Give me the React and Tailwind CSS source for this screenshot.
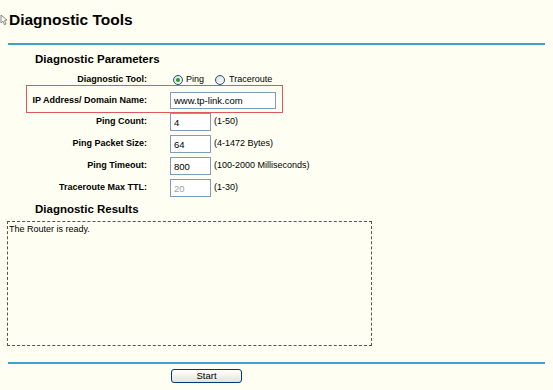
import React from "react";

const rows = [
  { label: "Ping Count:", value: "4", hint: "(1-50)" },
  { label: "Ping Packet Size:", value: "64", hint: "(4-1472 Bytes)" },
  { label: "Ping Timeout:", value: "800", hint: "(100-2000 Milliseconds)" },
  { label: "Traceroute Max TTL:", value: "20", hint: "(1-30)", disabled: true },
];

function Radio({ checked }) {
  return (
    <span className="flex h-[10px] w-[10px] items-center justify-center rounded-full border border-[#1c5180] bg-gradient-to-br from-[#dcdcd7] to-white">
      {checked && <span className="h-[4px] w-[4px] rounded-full bg-[#21a121]" />}
    </span>
  );
}

function Label({ children }) {
  return <div className="w-[147px] text-right text-[9px] font-bold text-black">{children}</div>;
}

export default function App() {
  return (
    <div className="h-[390px] w-[553px] overflow-hidden bg-[#fffef3] font-['Liberation_Sans',Arial,sans-serif] text-black">
      {/* title */}
      <div className="flex h-[43px] items-start pt-[11px]">
        <svg width="8" height="12" viewBox="0 0 8 12" className="mt-[3px]">
          <path d="M1 1 L7 6 L4.5 6.5 L6 10 L4.5 10.8 L3 7.2 L1 9 Z" fill="#fff" stroke="#777" strokeWidth="0.9" />
        </svg>
        <h1 className="ml-px text-[15.5px] font-bold leading-[18px]">Diagnostic Tools</h1>
      </div>
      <div className="mx-2 h-[2px] bg-[#41a0cc]" />

      <h2 className="mt-[7px] h-[14px] pl-[35px] text-[11.5px] font-bold leading-[14px]">Diagnostic Parameters</h2>

      <div className="mt-[4px]">
        <div className="flex h-[20px] items-center">
          <Label>Diagnostic Tool:</Label>
          <div className="ml-[26px] flex items-center text-[9px]">
            <Radio checked />
            <span className="ml-[3px]">Ping</span>
            <span className="ml-[11px]">
              <Radio />
            </span>
            <span className="ml-[4px]">Traceroute</span>
          </div>
        </div>

        <div className="relative flex h-[21px] items-center">
          <span className="absolute left-[26px] top-[-5px] h-[28px] w-[257px] border border-[#dc5a5a]" />
          <Label>IP Address/ Domain Name:</Label>
          <input
            readOnly
            value="www.tp-link.com"
            className="ml-[23px] h-[17px] w-[106px] border border-[#7f9db9] bg-white pl-[3px] text-[9.5px] text-black outline-none"
          />
        </div>

        {rows.map((r) => (
          <div key={r.label} className="flex h-[22px] items-center">
            <Label>{r.label}</Label>
            <input
              readOnly
              value={r.value}
              className={`ml-[23px] h-[18px] w-[41px] border border-[#7f9db9] bg-white pl-[3px] text-[9.5px] outline-none ${r.disabled ? "text-[#a0a0a0]" : "text-black"}`}
            />
            <span className="ml-[3px] text-[9px]">{r.hint}</span>
          </div>
        ))}
      </div>

      <h2 className="mt-[3px] h-[14px] pl-[35px] text-[11.5px] font-bold leading-[14px]">Diagnostic Results</h2>

      <div className="ml-[7px] mt-[5px] h-[125px] w-[365px] border border-dashed border-[#555]">
        <p className="pl-px pt-[1px] text-[9px] leading-[12px]">The Router is ready.</p>
      </div>

      <div className="mx-2 mt-[16px] h-[2px] bg-[#41a0cc]" />

      <div className="mt-[5px] pl-[171px]">
        <button className="flex h-[14px] w-[71px] items-center justify-center rounded-[3px] border border-[#003c74] bg-gradient-to-b from-white to-[#e3e3db] text-[9.5px] leading-none text-black">
          Start
        </button>
      </div>
    </div>
  );
}
